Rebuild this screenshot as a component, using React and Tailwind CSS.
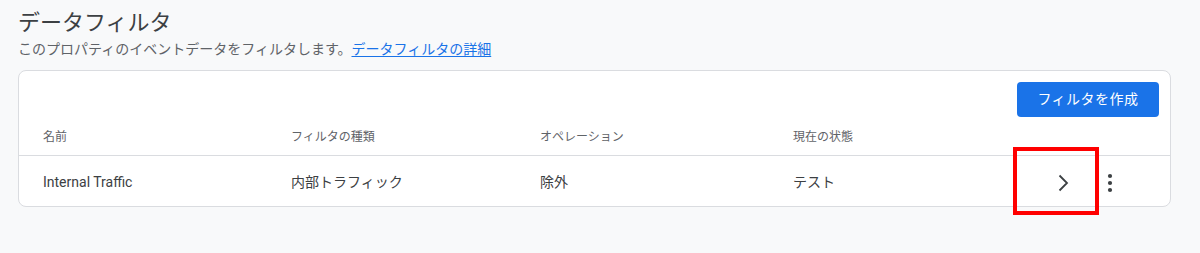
import React from "react";

const font = { fontFamily: 'Roboto, "Noto Sans CJK JP", sans-serif' };

function Chevron() {
  return (
    <svg width="24" height="24" viewBox="0 0 24 24" aria-hidden="true">
      <path d="M8.5 4.5 16 12 8.5 19.5" fill="none" stroke="#3c4043" strokeWidth="1.8" />
    </svg>
  );
}

function Kebab() {
  return (
    <svg width="24" height="24" viewBox="0 0 24 24" aria-hidden="true">
      <circle cx="12" cy="5" r="2.1" fill="#3c4043" />
      <circle cx="12" cy="12" r="2.1" fill="#3c4043" />
      <circle cx="12" cy="19" r="2.1" fill="#3c4043" />
    </svg>
  );
}

export default function App() {
  return (
    <div
      className="w-[1200px] h-[253px] bg-[#f8f9fa] pl-[18px] pr-[29px] pt-[9px] text-[#3c4043]"
      style={font}
    >
      <h1 className="text-[22px] leading-[28px] font-normal text-[#3c4043]">データフィルタ</h1>
      <p className="mt-[2px] text-[14px] leading-[20px] text-[#5f6368]">
        このプロパティのイベントデータをフィルタします。
        <a href="#" className="text-[#1a73e8] underline underline-offset-2">データフィルタの詳細</a>
      </p>
      <div className="relative mt-[11px] bg-white border border-[#dadce0] rounded-[8px]">
        <div className="flex justify-end pt-[11px] pr-[11px]">
          <button className="h-[35px] w-[142px] rounded-[4px] bg-[#1a73e8] text-white text-[14px] tracking-[0.5px]">
            フィルタを作成
          </button>
        </div>
        <div className="grid grid-cols-[248px_249px_253px_1fr] pl-[24px] h-[39px] pt-[2px] items-center text-[12px] text-[#5f6368] border-b border-[#dadce0]">
          <div>名前</div>
          <div>フィルタの種類</div>
          <div>オペレーション</div>
          <div>現在の状態</div>
        </div>
        <div className="grid grid-cols-[248px_249px_253px_1fr] pl-[24px] h-[50px] pt-[3px] items-center text-[14px] text-[#3c4043]">
          <div>Internal Traffic</div>
          <div>内部トラフィック</div>
          <div>除外</div>
          <div className="flex items-center justify-between pr-[40px]">
            <span>テスト</span>
            <div className="flex items-center gap-[7px]">
              <div className="w-[40px] h-[40px] flex items-center justify-center">
                <Chevron />
              </div>
              <div className="w-[40px] h-[40px] flex items-center justify-center">
                <Kebab />
              </div>
            </div>
          </div>
        </div>
        <div className="absolute left-[994px] top-[76px] w-[86px] h-[68px] border-[4px] border-[#ff0000]" />
      </div>
    </div>
  );
}
